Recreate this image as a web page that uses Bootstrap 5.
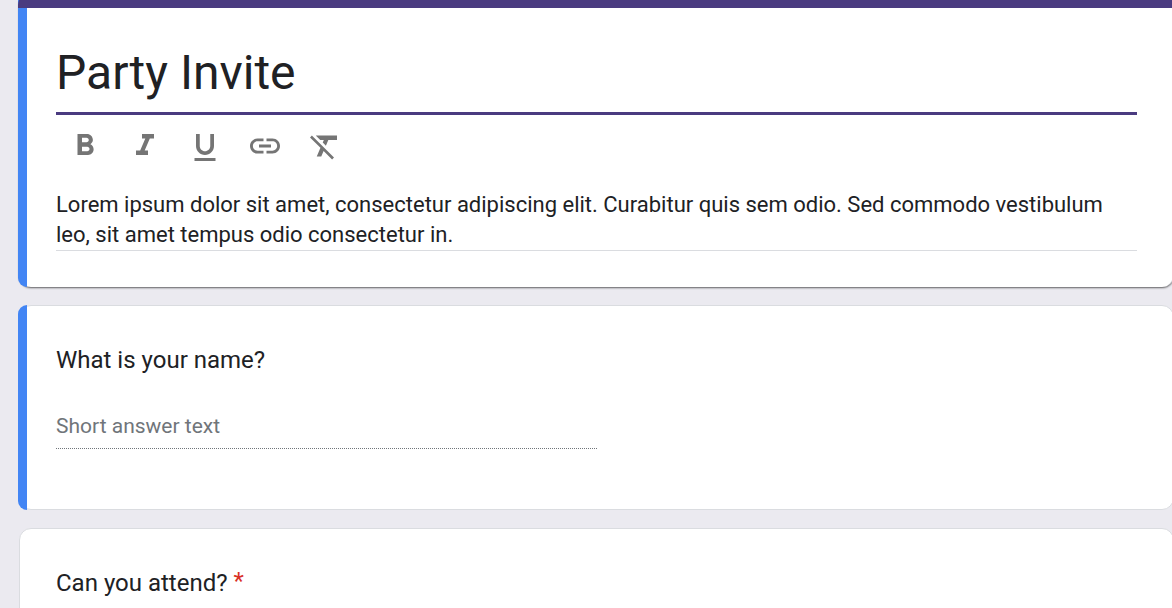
<!DOCTYPE html>
<html lang="en">
<head>
<meta charset="utf-8">
<meta name="viewport" content="width=device-width, initial-scale=1">
<title>Party Invite</title>
<link href="https://cdn.jsdelivr.net/npm/bootstrap@5.3.0/dist/css/bootstrap.min.css" rel="stylesheet">
<style>
  body { background: #ebeaf0; color: #202124; font-family: Roboto, sans-serif; overflow-x: hidden; }
  /* The form runs slightly past the top and right edges of the window */
  .form-page { margin: -7px -2px 0 19px; gap: 18px; }
  .form-card { border: 1px solid #dadce0; border-radius: 12px; padding: 38px 36px 36px; }
  .form-card.picked::before { content: ""; position: absolute; top: -1px; bottom: -1px; left: -2px; width: 9px; background: #4285f4; border-radius: 12px 0 0 12px; }
  .title-card { padding-top: 51px; border-top: 0; border-bottom: 0; box-shadow: 0 1px 2px rgba(0,0,0,.6); }
  .form-card.title-card::before { bottom: 0; }
  .theme-strip { position: absolute; top: 0; left: -2px; right: -1px; height: 15px; background: #4a3b80; border-radius: 12px 12px 0 0; }
  .field { display: block; width: 100%; padding: 0; border: 0; background: transparent; color: inherit; outline: 0; resize: none; overflow: hidden; border-radius: 0; }
  .title-field { font-size: 48px; line-height: 56px; height: 71px; padding-bottom: 12px; border-bottom: 3px solid #4a3b80; }
  .desc-field { font-size: 22px; line-height: 30px; height: 61px; border-bottom: 1px solid #dadce0; }
  .tools { gap: 24px; padding: 13px 11px 0; margin-bottom: 26px; }
  .tool { width: 36px; height: 36px; padding: 0; border: 0; background: none; color: #757575; }
  .tool svg { display: block; width: 36px; height: 36px; fill: currentColor; }
  .question { font-size: 24px; line-height: 32px; }
  .required { color: #d93025; vertical-align: 2px; line-height: 1; }
  .answer-field { font-size: 21px; line-height: 30px; height: 39px; width: 50%; padding-bottom: 6px; border-bottom: 1px dotted #70757a; margin-top: 34px; margin-bottom: 24px; }
  .answer-field::placeholder { color: #70757a; opacity: 1; }
</style>
</head>
<body>
<main class="form-page d-flex flex-column">
  <section class="form-card title-card picked bg-white position-relative">
    <div class="theme-strip"></div>
    <input class="field title-field" type="text" value="Party Invite" aria-label="Form title">
    <div class="tools d-flex" role="toolbar" aria-label="Text formatting">
      <button class="tool" type="button" aria-label="Bold"><svg viewBox="0 0 24 24"><path d="M15.6 10.79c.97-.67 1.65-1.77 1.65-2.79 0-2.26-1.75-4-4-4H7v14h7.04c2.09 0 3.71-1.7 3.71-3.79 0-1.52-.86-2.82-2.15-3.42zM10 6.5h3c.83 0 1.5.67 1.5 1.5s-.67 1.5-1.5 1.5h-3v-3zm3.5 9H10v-3h3.5c.83 0 1.5.67 1.5 1.5s-.67 1.5-1.5 1.5z"/></svg></button>
      <button class="tool" type="button" aria-label="Italic"><svg viewBox="0 0 24 24"><path d="M10 4v3h2.21l-3.42 8H6v3h8v-3h-2.21l3.42-8H18V4z"/></svg></button>
      <button class="tool" type="button" aria-label="Underline"><svg viewBox="0 0 24 24"><path d="M12 18c3.31 0 6-2.69 6-6V4h-2.5v8c0 1.93-1.57 3.5-3.5 3.5S8.5 13.93 8.5 12V4H6v8c0 3.31 2.69 6 6 6zm-7 2v2h14v-2H5z"/></svg></button>
      <button class="tool" type="button" aria-label="Insert link"><svg viewBox="0 0 24 24"><path d="M3.9 12c0-1.71 1.39-3.1 3.1-3.1h4V7H7c-2.76 0-5 2.24-5 5s2.24 5 5 5h4v-1.9H7c-1.71 0-3.1-1.39-3.1-3.1zM8 13h8v-2H8v2zm9-6h-4v1.9h4c1.71 0 3.1 1.39 3.1 3.1s-1.39 3.1-3.1 3.1h-4V17h4c2.76 0 5-2.24 5-5s-2.24-5-5-5z"/></svg></button>
      <button class="tool" type="button" aria-label="Remove formatting"><svg viewBox="0 0 24 24"><path d="M3.27 5L2 6.27l6.97 6.97L6.5 19h3l1.57-3.66L16.73 21 18 19.73 3.55 5.27 3.27 5zM6 5v.18L8.82 8h2.4l-.72 1.68 2.1 2.1L14.21 8H20V5H6z"/></svg></button>
    </div>
    <textarea class="field desc-field" rows="2" spellcheck="false" aria-label="Form description">Lorem ipsum dolor sit amet, consectetur adipiscing elit. Curabitur quis sem odio. Sed commodo vestibulum leo, sit amet tempus odio consectetur in.</textarea>
  </section>

  <section class="form-card picked bg-white position-relative">
    <label class="question d-block" for="name">What is your name?</label>
    <input class="field answer-field" id="name" type="text" placeholder="Short answer text">
  </section>

  <section class="form-card bg-white">
    <h2 class="question fw-normal mb-0">Can you attend? <span class="required">*</span></h2>
  </section>
</main>
<script src="https://cdn.jsdelivr.net/npm/bootstrap@5.3.0/dist/js/bootstrap.bundle.min.js"></script>
</body>
</html>
